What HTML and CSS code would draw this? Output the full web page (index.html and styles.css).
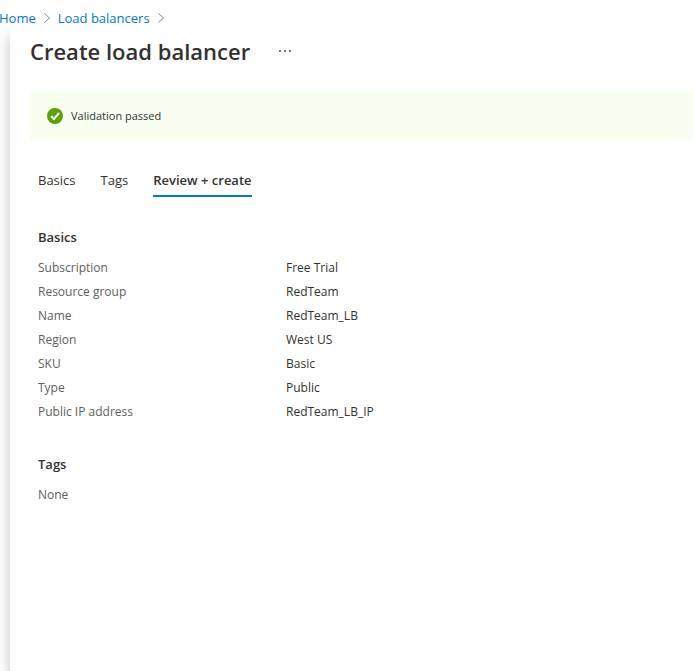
FILE: index.html
```html
<!DOCTYPE html>
<html lang="en">
<head>
<meta charset="utf-8">
<title>Create load balancer</title>
<link rel="stylesheet" href="styles.css">
</head>
<body>
<nav class="breadcrumb" aria-label="Breadcrumb">
  <a href="#">Home</a>
  <svg class="chevron" viewBox="0 0 6 10" aria-hidden="true"><path d="M.5.5 5.500 5 .5 9.500"/></svg>
  <a href="#">Load balancers</a>
  <svg class="chevron" viewBox="0 0 6 10" aria-hidden="true"><path d="M.5.5 5.500 5 .5 9.500"/></svg>
</nav>
<main class="blade">
  <header class="title-bar">
    <h1>Create load balancer</h1>
    <button class="more" type="button" aria-label="More actions">
      <svg viewBox="0 0 12 2" aria-hidden="true"><circle cx="1" cy="1" r=".9"/><circle cx="6" cy="1" r=".9"/><circle cx="11" cy="1" r=".9"/></svg>
    </button>
  </header>
  <div class="banner" role="status">
    <svg class="check" viewBox="0 0 16 16" aria-hidden="true"><circle cx="8" cy="8" r="8"/><path d="m4.200 8.200 2.800 2.800 5-6"/></svg>
    <span>Validation passed</span>
  </div>
  <div class="tabs" role="tablist">
    <button type="button" role="tab" class="tab">Basics</button>
    <button type="button" role="tab" class="tab">Tags</button>
    <button type="button" role="tab" class="tab active" aria-selected="true">Review + create</button>
  </div>
  <section class="summary">
    <h2>Basics</h2>
    <dl>
      <dt>Subscription</dt><dd>Free Trial</dd>
      <dt>Resource group</dt><dd>RedTeam</dd>
      <dt>Name</dt><dd>RedTeam_LB</dd>
      <dt>Region</dt><dd>West US</dd>
      <dt>SKU</dt><dd>Basic</dd>
      <dt>Type</dt><dd>Public</dd>
      <dt>Public IP address</dt><dd>RedTeam_LB_IP</dd>
    </dl>
  </section>
  <section class="summary">
    <h2>Tags</h2>
    <p>None</p>
  </section>
</main>
</body>
</html>
```
FILE: styles.css
```css
* { box-sizing: border-box; }
body {
  margin: 0;
  min-height: 100vh;
  display: flex;
  flex-direction: column;
  background: #fff;
  color: #323130;
  font: 13px/24px "Segoe UI", "Open Sans", sans-serif;
}
h1, h2, p, dl, dd { margin: 0; }
button { font: inherit; color: inherit; background: none; border: 0; padding: 0; }
.breadcrumb { display: flex; align-items: center; gap: 8px; height: 28px; margin-left: -1px; padding-top: 8px; }
.breadcrumb a { color: #0078d4; text-decoration: none; }
.chevron { width: 6px; height: 10px; fill: none; stroke: #8a8886; }
.blade { flex: 1; margin-left: 10px; padding: 0 1px 0 20px; box-shadow: 0 8px 12px rgba(0, 0, 0, .25); clip-path: inset(0 0 0 -10px); }
.title-bar { display: flex; align-items: center; gap: 29px; height: 45px; }
h1 { font-size: 22px; font-weight: 600; line-height: 32px; }
.more { display: flex; }
.more svg { width: 12px; height: 2px; fill: #323130; }
.banner { display: flex; align-items: center; gap: 8px; height: 50px; margin-top: 18px; padding: 0 17px; background: #f8fff0; font-size: 11px; }
.check { width: 16px; height: 16px; fill: #57a300; }
.check path { fill: none; stroke: #fff; stroke-width: 2; }
.tabs { display: flex; gap: 25px; padding: 28px 8px 0; }
.tab { height: 28px; padding-bottom: 4px; border-bottom: 2px solid transparent; line-height: 22px; }
.active { border-color: #0078d4; font-weight: 600; }
.summary { padding: 28px 8px 0; font-size: 12px; }
h2 { font-size: 13px; font-weight: 600; line-height: 24px; margin-bottom: 7px; }
dl { display: grid; grid-template-columns: 248px 1fr; }
dt, .summary p { color: #605e5c; }
```
